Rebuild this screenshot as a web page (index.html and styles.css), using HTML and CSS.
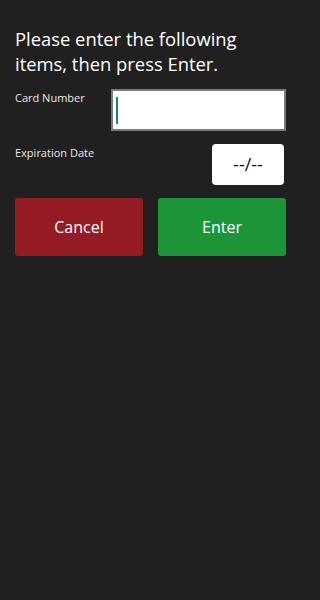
FILE: index.html
```html
<!DOCTYPE html>
<html lang="en">
<head>
<meta charset="utf-8">
<link rel="stylesheet" href="styles.css">
</head>
<body>
<main class="screen">
  <h1 class="title">Please enter the following items, then press Enter.</h1>
  <div class="field field-card">
    <span class="label">Card Number</span>
    <div class="input input-card"><span class="cursor"></span></div>
  </div>
  <div class="field field-date">
    <span class="label">Expiration Date</span>
    <div class="input input-date">--/--</div>
  </div>
  <div class="actions">
    <button class="btn btn-cancel">Cancel</button>
    <button class="btn btn-enter">Enter</button>
  </div>
</main>
</body>
</html>
```

FILE: styles.css
```css
html, body {
  margin: 0;
  padding: 0;
  background: #202020;
  height: 100%;
}
.screen {
  box-sizing: border-box;
  width: 300px;
  font-family: "Open Sans", "Noto Sans", sans-serif;
  color: #ffffff;
  padding: 26px 14px 0 15px;
}
.title {
  margin: 0;
  font-size: 18.4px;
  font-weight: 400;
  line-height: 25px;
  width: 240px;
}
.field {
  display: flex;
  justify-content: space-between;
  align-items: flex-start;
}
.field-card {
  margin-top: 13px;
}
.field-date {
  margin-top: 13px;
  padding-right: 2px;
}
.label {
  font-size: 11px;
  line-height: 16px;
  color: #e8e8e8;
  padding-top: 1px;
}
.input {
  background: #ffffff;
  box-sizing: border-box;
}
.input-card {
  width: 175px;
  height: 42px;
  border: 2px solid #7a7a7a;
  padding: 6px 0 0 3px;
}
.cursor {
  display: block;
  width: 2px;
  height: 27px;
  background: #128a6c;
}
.input-date {
  width: 72px;
  height: 41px;
  border-radius: 4px;
  color: #111111;
  font-size: 18px;
  line-height: 41px;
  text-align: center;
}
.actions {
  display: flex;
  gap: 15px;
  margin-top: 13px;
}
.btn {
  flex: 1;
  height: 58px;
  border: none;
  border-radius: 3px;
  color: #ffffff;
  font-family: "Open Sans", "Noto Sans", sans-serif;
  font-size: 16px;
}
.btn-cancel {
  background: #951b25;
}
.btn-enter {
  background: #1c9538;
}
```
